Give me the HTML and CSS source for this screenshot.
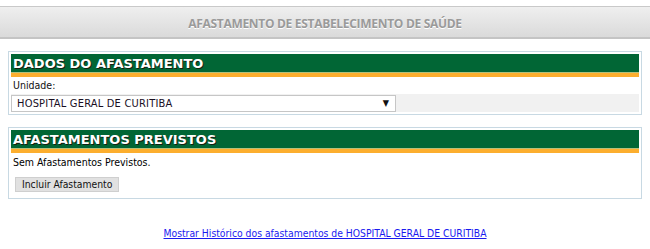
FILE: index.html
```html
<!DOCTYPE html>
<html lang="pt-BR">
<head>
<meta charset="utf-8">
<title>Afastamento de Estabelecimento de Saúde</title>
<link rel="stylesheet" href="styles.css">
</head>
<body>
<div class="page-header">
  <h1 class="page-title">AFASTAMENTO DE ESTABELECIMENTO DE SAÚDE</h1>
</div>

<section class="box box-dados">
  <div class="bar"><h2 class="bar-title">DADOS DO AFASTAMENTO</h2></div>
  <div class="label-row">Unidade:</div>
  <div class="field-row">
    <div class="select">
      <span class="select-text">HOSPITAL GERAL DE CURITIBA</span>
      <span class="select-arrow">▼</span>
    </div>
  </div>
</section>

<section class="box box-previstos">
  <div class="bar"><h2 class="bar-title">AFASTAMENTOS PREVISTOS</h2></div>
  <div class="text-row">Sem Afastamentos Previstos.</div>
  <div class="button-row"><button class="btn" type="button">Incluir Afastamento</button></div>
</section>

<div class="footer-link">
  <a href="#" class="link">Mostrar Histórico dos afastamentos de HOSPITAL GERAL DE CURITIBA</a>
</div>
</body>
</html>
```

FILE: styles.css
```css
html, body {
  margin: 0;
  padding: 0;
  background: #ffffff;
}
body {
  font-family: "DejaVu Sans Condensed", "DejaVu Sans", sans-serif;
  font-size: 11px;
  color: #000;
}
.page-header {
  margin-top: 6px;
  height: 30px;
  border-top: 1px solid #c9c9c9;
  border-bottom: 2px solid #c4c4c4;
  background: linear-gradient(#efefef, #dadada);
  display: flex;
  align-items: center;
  justify-content: center;
}
.page-title {
  margin: 0;
  padding-top: 2px;
  font-family: "Open Sans", sans-serif;
  font-weight: 700;
  font-size: 12px;
  letter-spacing: -0.3px;
  color: #9a9a9a;
  text-shadow: 0 1px 0 #ffffff;
  white-space: nowrap;
}
.box {
  margin: 12px 8px 0 8px;
  border: 1px solid #c8d9e3;
  padding: 2px;
  display: flex;
  flex-direction: column;
  gap: 2px;
}
.bar {
  height: 18px;
  background: #016635;
  border-bottom: 1px solid #b5c07a;
  box-shadow: 0 4px 0 #fcae2e;
  margin-bottom: 4px;
  display: flex;
  align-items: center;
  padding-left: 2px;
}
.bar-title {
  margin: 0;
  font-family: "DejaVu Sans", Verdana, sans-serif;
  font-weight: bold;
  font-size: 13px;
  color: #ffffff;
  text-shadow: 1px 1px 0 #142012;
  line-height: 18px;
  padding-top: 2px;
}
.label-row {
  height: 13px;
  line-height: 13px;
  padding-left: 2px;
  font-size: 10.5px;
  color: #111;
}
.field-row {
  background: #f1f1f1;
  height: 18px;
  display: flex;
  align-items: center;
}
.select {
  width: 372px;
  height: 15px;
  border: 1px solid #c6c6c6;
  background: #fff;
  display: flex;
  align-items: center;
  justify-content: space-between;
  padding: 0 6px 0 5px;
  box-sizing: content-box;
}
.select-text {
  color: #1a0f1f;
  letter-spacing: 0.2px;
}
.select-arrow {
  font-size: 9px;
  color: #111;
}
.text-row {
  height: 13px;
  line-height: 13px;
  padding-left: 2px;
  padding-top: 1px;
  font-size: 10.5px;
}
.button-row {
  padding: 6px 4px 4px 4px;
}
.btn {
  font-family: "DejaVu Sans Condensed", "DejaVu Sans", sans-serif;
  font-size: 10.3px;
  height: 15px;
  padding: 0 6px;
  background: #e1e1e1;
  border: 1px solid #cfcfcf;
  color: #111;
  line-height: 13px;
}
.footer-link {
  text-align: center;
  margin-top: 28px;
}
.link {
  font-size: 10.3px;
  color: #1a1aef;
  text-decoration: underline;
}
```
